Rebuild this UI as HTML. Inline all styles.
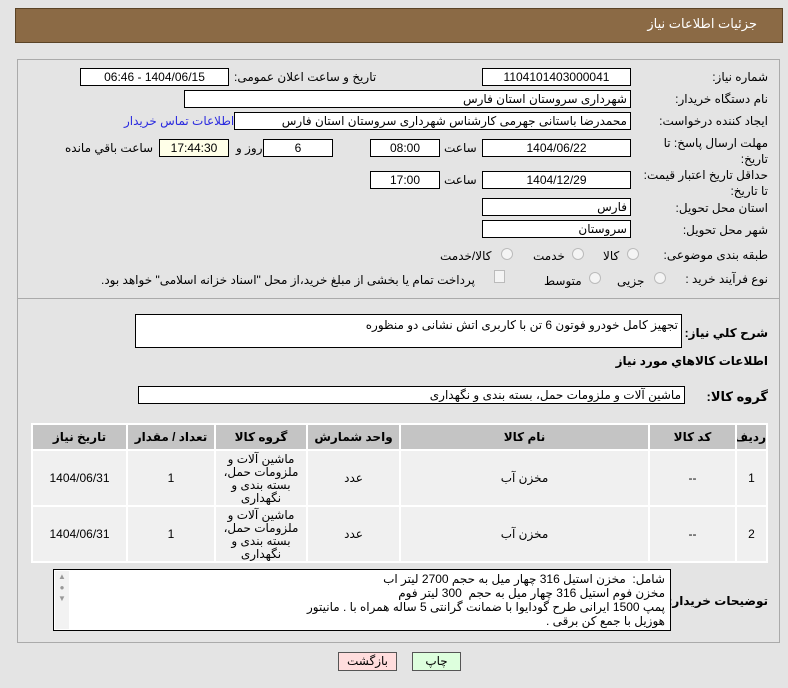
<!DOCTYPE html>
<html><head><meta charset="utf-8"><style>
*{box-sizing:border-box;margin:0;padding:0}
body{width:788px;height:688px;background:#e4e4e4;font-family:"Liberation Sans","DejaVu Sans",sans-serif;font-size:12px;color:#000;position:relative;overflow:hidden;direction:rtl}
.a{position:absolute;white-space:nowrap}
.box{position:absolute;background:#fff;border:1px solid #000;height:18px;line-height:16px;text-align:center;overflow:hidden}
.l{text-align:right;padding-right:3px}
.r{position:absolute;width:12px;height:12px;border-radius:50%;border:1px solid #bbb;background:#f4f4f4}
td{border:2px solid #fff;text-align:center;font-size:12px;overflow:hidden;padding:0}
.g{height:54px;overflow:hidden;line-height:13px;white-space:normal;padding:1px 2px 0;font-size:12px;display:flex;align-items:center;justify-content:center}
</style></head><body>
<div class="a" style="left:15px;top:8px;width:768px;height:35px;background:#8b6a45;border:1px solid #5a4326"></div>
<div class="a" style="right:31px;top:16px;color:#fff;font-size:13px">جزئیات اطلاعات نیاز</div>
<div class="a" style="left:17px;top:59px;width:763px;height:584px;border:1px solid #aaa"></div>
<div class="a" style="left:18px;top:298px;width:761px;border-top:1px solid #aaa"></div>

<div class="a" style="right:20px;top:70px">شماره نیاز:</div>
<div class="box" style="left:482px;top:68px;width:149px">1104101403000041</div>
<div class="a" style="left:234px;top:70px">تاریخ و ساعت اعلان عمومی:</div>
<div class="box" style="left:80px;top:68px;width:149px">1404/06/15 - 06:46</div>

<div class="a" style="right:20px;top:92px">نام دستگاه خریدار:</div>
<div class="box l" style="left:184px;top:90px;width:447px">شهرداری سروستان استان فارس</div>

<div class="a" style="right:20px;top:114px">ایجاد کننده درخواست:</div>
<div class="box l" style="left:234px;top:112px;width:397px">محمدرضا باستانی جهرمی کارشناس شهرداری سروستان استان فارس</div>
<div class="a" style="left:124px;top:114px;color:#2a2adf">اطلاعات تماس خریدار</div>

<div class="a" style="right:20px;top:135px;line-height:16px;white-space:normal;width:130px">مهلت ارسال پاسخ: تا تاریخ:</div>
<div class="box" style="left:482px;top:139px;width:149px">1404/06/22</div>
<div class="a" style="left:444px;top:141px">ساعت</div>
<div class="box" style="left:370px;top:139px;width:70px">08:00</div>
<div class="box" style="left:263px;top:139px;width:70px">6</div>
<div class="a" style="left:236px;top:141px">روز و</div>
<div class="box" style="left:159px;top:139px;width:70px;background:#ffffe8">17:44:30</div>
<div class="a" style="left:65px;top:141px">ساعت باقي مانده</div>

<div class="a" style="right:20px;top:167px;line-height:16px;white-space:normal;width:130px">حداقل تاریخ اعتبار قیمت: تا تاریخ:</div>
<div class="box" style="left:482px;top:171px;width:149px">1404/12/29</div>
<div class="a" style="left:444px;top:173px">ساعت</div>
<div class="box" style="left:370px;top:171px;width:70px">17:00</div>

<div class="a" style="right:20px;top:201px">استان محل تحویل:</div>
<div class="box l" style="left:482px;top:198px;width:149px">فارس</div>
<div class="a" style="right:20px;top:223px">شهر محل تحویل:</div>
<div class="box l" style="left:482px;top:220px;width:149px">سروستان</div>

<div class="a" style="right:20px;top:248px">طبقه بندی موضوعی:</div>
<div class="r" style="left:627px;top:248px"></div><div class="a" style="left:603px;top:249px">کالا</div>
<div class="r" style="left:572px;top:248px"></div><div class="a" style="left:533px;top:249px">خدمت</div>
<div class="r" style="left:501px;top:248px"></div><div class="a" style="left:440px;top:249px">کالا/خدمت</div>

<div class="a" style="right:20px;top:272px">نوع فرآیند خرید :</div>
<div class="r" style="left:654px;top:272px"></div><div class="a" style="left:617px;top:274px">جزیی</div>
<div class="r" style="left:589px;top:272px"></div><div class="a" style="left:544px;top:274px">متوسط</div>
<div class="a" style="left:494px;top:270px;width:11px;height:13px;border:1px solid #bbb;background:#f4f4f4"></div>
<div class="a" style="left:101px;top:273px">پرداخت تمام یا بخشی از مبلغ خرید،از محل "اسناد خزانه اسلامی" خواهد بود.</div>

<div class="a" style="right:20px;top:326px;font-weight:bold">شرح کلي نياز:</div>
<div class="box l" style="left:135px;top:314px;width:547px;height:34px;text-align:right;padding-top:2px">تجهیز کامل خودرو فوتون 6 تن با کاربری اتش نشانی دو منظوره</div>
<div class="a" style="right:20px;top:354px;font-weight:bold">اطلاعات کالاهاي مورد نياز</div>
<div class="a" style="right:20px;top:389px;font-weight:bold;font-size:13px">گروه کالا:</div>
<div class="box l" style="left:138px;top:386px;width:547px">ماشین آلات و ملزومات حمل، بسته بندی و نگهداری</div>

<table class="a" style="left:31px;top:423px;width:737px;border-collapse:collapse;border:1px solid #aaa;direction:rtl;table-layout:fixed">
<colgroup><col style="width:31px"><col style="width:87px"><col style="width:249px"><col style="width:93px"><col style="width:92px"><col style="width:88px"><col></colgroup>
<tr style="background:#c4c4c4;font-weight:bold;height:26px"><td>رديف</td><td>کد کالا</td><td>نام کالا</td><td>واحد شمارش</td><td>گروه کالا</td><td>تعداد / مقدار</td><td>تاريخ نياز</td></tr>
<tr style="background:#f0f0f0"><td>1</td><td>--</td><td>مخزن آب</td><td>عدد</td><td><div class="g">ماشین آلات و ملزومات حمل، بسته بندی و نگهداری</div></td><td>1</td><td>1404/06/31</td></tr>
<tr style="background:#f0f0f0"><td>2</td><td>--</td><td>مخزن آب</td><td>عدد</td><td><div class="g">ماشین آلات و ملزومات حمل، بسته بندی و نگهداری</div></td><td>1</td><td>1404/06/31</td></tr>
</table>

<div class="a" style="right:20px;top:594px;font-weight:bold">توضیحات خریدار:</div>
<div class="a" style="left:53px;top:569px;width:618px;height:62px;background:#fff;border:1px solid #000"></div>
<div class="a" style="left:55px;top:571px;width:14px;height:58px;background:#f2f2f2;color:#999;font-size:8px;text-align:center;line-height:11px;white-space:normal">▲<br>●<br>▼</div>
<div class="a" style="right:123px;top:572px;line-height:14px;text-align:right">شامل:&nbsp; مخزن استیل 316 چهار میل به حجم 2700 لیتر اب<br>مخزن فوم استیل 316 چهار میل به حجم&nbsp; 300 لیتر فوم<br>پمپ 1500 ایرانی طرح گودایوا با ضمانت گرانتی 5 ساله همراه با . مانیتور<br>هوزیل با جمع کن برقی .</div>

<div class="a" style="left:338px;top:652px;width:59px;height:19px;background:#fdd;border:1px solid #555;text-align:center;line-height:17px">بازگشت</div>
<div class="a" style="left:412px;top:652px;width:49px;height:19px;background:#dfd;border:1px solid #555;text-align:center;line-height:17px">چاپ</div>
</body></html>
